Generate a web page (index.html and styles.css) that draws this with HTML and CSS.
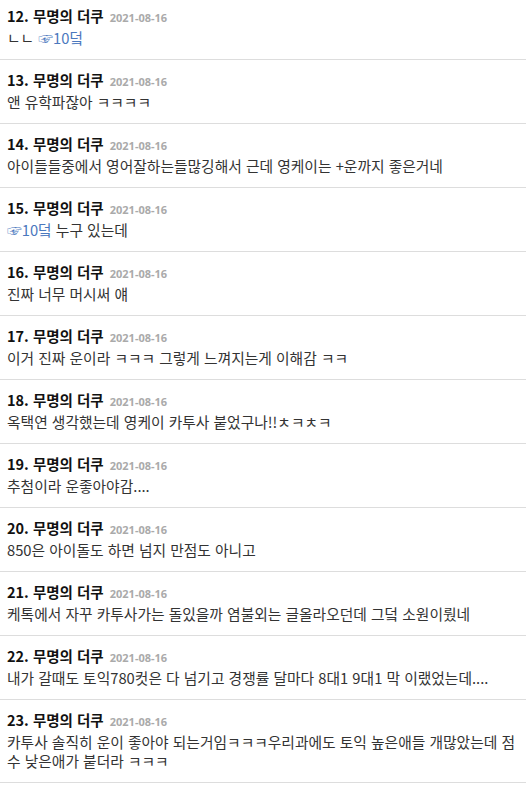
FILE: index.html
```html
<!DOCTYPE html>
<html lang="ko">
<head>
<meta charset="utf-8">
<title>댓글</title>
<link rel="stylesheet" href="styles.css">
</head>
<body>

<!-- 댓글 목록 -->
<div class="comments">
  <div class="comment">
    <div class="comment-head"><span class="num">12.</span> 무명의 더쿠 <span class="date">2021-08-16</span></div>
    <div class="comment-body">ㄴㄴ <span class="ref">☞10덬</span></div>
  </div>
  <div class="comment">
    <div class="comment-head"><span class="num">13.</span> 무명의 더쿠 <span class="date">2021-08-16</span></div>
    <div class="comment-body">앤 유학파잖아 ㅋㅋㅋㅋ</div>
  </div>
  <div class="comment">
    <div class="comment-head"><span class="num">14.</span> 무명의 더쿠 <span class="date">2021-08-16</span></div>
    <div class="comment-body">아이들들중에서 영어잘하는들많깅해서 근데 영케이는 +운까지 좋은거네</div>
  </div>
  <div class="comment">
    <div class="comment-head"><span class="num">15.</span> 무명의 더쿠 <span class="date">2021-08-16</span></div>
    <div class="comment-body"><span class="ref">☞10덬</span> 누구 있는데</div>
  </div>
  <div class="comment">
    <div class="comment-head"><span class="num">16.</span> 무명의 더쿠 <span class="date">2021-08-16</span></div>
    <div class="comment-body">진짜 너무 머시써 얘</div>
  </div>
  <div class="comment">
    <div class="comment-head"><span class="num">17.</span> 무명의 더쿠 <span class="date">2021-08-16</span></div>
    <div class="comment-body">이거 진짜 운이라 ㅋㅋㅋ 그렇게 느껴지는게 이해감 ㅋㅋ</div>
  </div>
  <div class="comment">
    <div class="comment-head"><span class="num">18.</span> 무명의 더쿠 <span class="date">2021-08-16</span></div>
    <div class="comment-body">옥택연 생각했는데 영케이 카투사 붙었구나!!ㅊㅋㅊㅋ</div>
  </div>
  <div class="comment">
    <div class="comment-head"><span class="num">19.</span> 무명의 더쿠 <span class="date">2021-08-16</span></div>
    <div class="comment-body">추첨이라 운좋아야감....</div>
  </div>
  <div class="comment">
    <div class="comment-head"><span class="num">20.</span> 무명의 더쿠 <span class="date">2021-08-16</span></div>
    <div class="comment-body">850은 아이돌도 하면 넘지 만점도 아니고</div>
  </div>
  <div class="comment">
    <div class="comment-head"><span class="num">21.</span> 무명의 더쿠 <span class="date">2021-08-16</span></div>
    <div class="comment-body">케톡에서 자꾸 카투사가는 돌있을까 염불외는 글올라오던데 그덬 소원이뤘네</div>
  </div>
  <div class="comment">
    <div class="comment-head"><span class="num">22.</span> 무명의 더쿠 <span class="date">2021-08-16</span></div>
    <div class="comment-body">내가 갈때도 토익780컷은 다 넘기고 경쟁률 달마다 8대1 9대1 막 이랬었는데....</div>
  </div>
  <div class="comment">
    <div class="comment-head"><span class="num">23.</span> 무명의 더쿠 <span class="date">2021-08-16</span></div>
    <div class="comment-body">카투사 솔직히 운이 좋아야 되는거임ㅋㅋㅋ우리과에도 토익 높은애들 개많았는데 점수 낮은애가 붙더라 ㅋㅋㅋ</div>
  </div>
</div>

</body>
</html>
```

FILE: styles.css
```css
body {
  margin: 0;
  padding: 0;
  background-color: #ffffff;
  font-family: "Noto Sans CJK KR", "Noto Sans", sans-serif;
  color: #333333;
}

/* Comment list */
.comments {
  margin-top: -4px; /* page is scrolled a little */
}

.comment {
  padding: 10px 7px 12px;
  border-bottom: 1px solid #dddddd;
}

.comment-head {
  height: 20px;
  font-size: 14.5px;
  font-weight: bold;
  line-height: 20px;
  color: #111111;
}

.date {
  margin-left: 2px;
  font-family: "Open Sans", "Liberation Sans", sans-serif;
  font-size: 11px;
  font-weight: bold;
  line-height: 10px;
  color: #aaaaaa;
}

.comment-body {
  margin-top: 2px;
  font-size: 14.75px;
  line-height: 19px;
  color: #333333;
}

.ref {
  line-height: 10px;
  color: #4b78be;
}
```
